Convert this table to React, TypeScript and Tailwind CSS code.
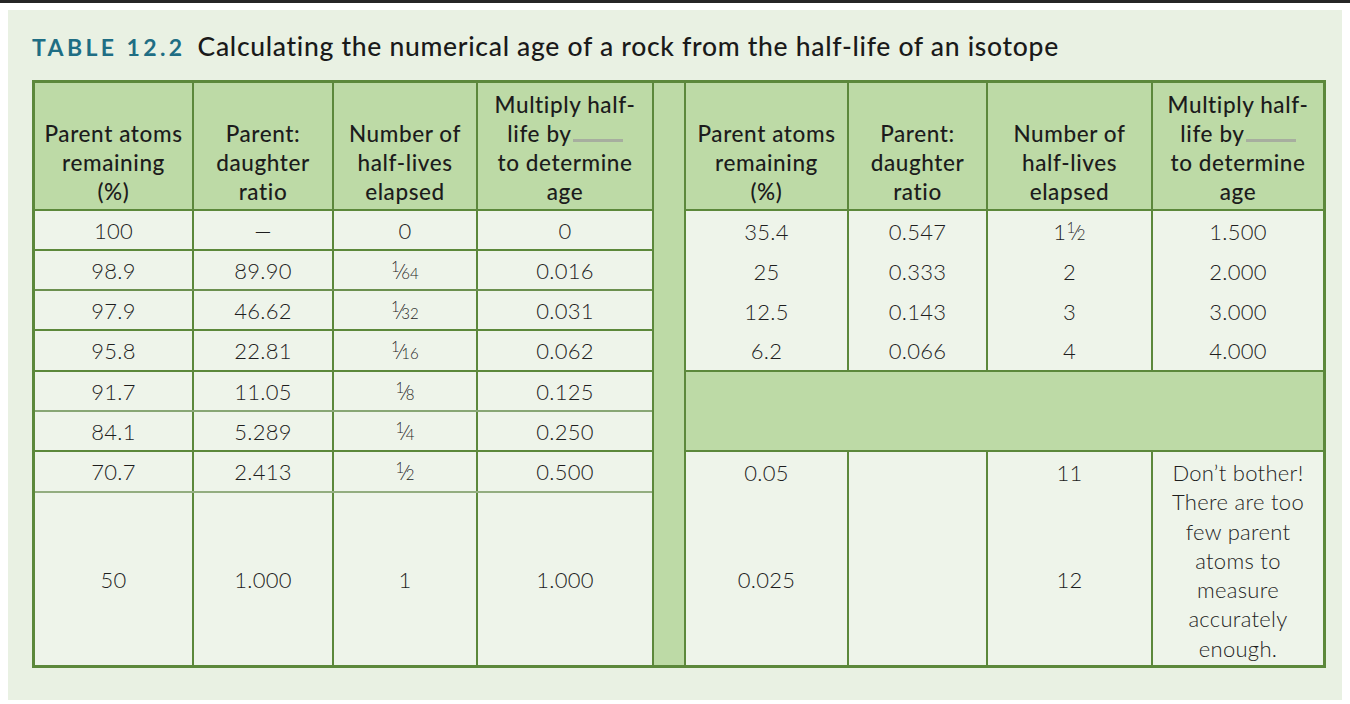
import React from "react";

const FONT = { fontFamily: "Lato, 'Open Sans', 'Liberation Sans', sans-serif" };

function Frac({ n, d }: { n: string; d: string }) {
  return (
    <span className="whitespace-nowrap">
      <span className="text-[15px] align-[7px]">{n}</span>
      <span className="text-[21px] mx-[-1px]">⁄</span>
      <span className="text-[15px]">{d}</span>
    </span>
  );
}

const HEADERS: React.ReactNode[] = [
  <>Parent atoms<br />remaining<br />(%)</>,
  <>Parent:<br />daughter<br />ratio</>,
  <>Number of<br />half-lives<br />elapsed</>,
  <>
    Multiply half-<br />
    life by
    <span className="inline-block w-[50px] h-[3px] bg-[#a7ae9f] align-baseline ml-[1px]" />
    <br />to determine<br />age
  </>,
];

function HeaderRow({ widths }: { widths: string[] }) {
  return (
    <div className="flex h-[128px] bg-[#bddaa6] border-b-2 border-[#5c883b]">
      {HEADERS.map((h, i) => (
        <div
          key={i}
          className={`${widths[i]} flex flex-col justify-end items-center text-center pb-[3px] leading-[29px] text-[22.5px] tracking-[0.6px] font-medium text-[#1c1c1c] ${
            i < 3 ? "border-r-2 border-[#5c883b]" : ""
          }`}
        >
          <div>{h}</div>
        </div>
      ))}
    </div>
  );
}

const LW = ["w-[159px]", "w-[140px]", "w-[144px]", "w-[174px]"];
const RW = ["w-[163px]", "w-[139px]", "w-[165px]", "w-[170px]"];

type Row = { cells: React.ReactNode[]; h: string; line: string };

const LEFT_ROWS: Row[] = [
  { cells: ["100", "—", "0", "0"], h: "h-[40px]", line: "border-[#5c883b]" },
  { cells: ["98.9", "89.90", <Frac n="1" d="64" />, "0.016"], h: "h-[40px]", line: "border-[#6b8f4f]" },
  { cells: ["97.9", "46.62", <Frac n="1" d="32" />, "0.031"], h: "h-[40px]", line: "border-[#5c883b]" },
  { cells: ["95.8", "22.81", <Frac n="1" d="16" />, "0.062"], h: "h-[41px]", line: "border-[#5c883b]" },
  { cells: ["91.7", "11.05", <Frac n="1" d="8" />, "0.125"], h: "h-[40px]", line: "border-[#88a675]" },
  { cells: ["84.1", "5.289", <Frac n="1" d="4" />, "0.250"], h: "h-[40px]", line: "border-[#5c883b]" },
  { cells: ["70.7", "2.413", <Frac n="1" d="2" />, "0.500"], h: "h-[41px]", line: "border-[#93ad80]" },
];

const RIGHT_ROWS: React.ReactNode[][] = [
  ["35.4", "0.547", <>1<Frac n="1" d="2" /></>, "1.500"],
  ["25", "0.333", "2", "2.000"],
  ["12.5", "0.143", "3", "3.000"],
  ["6.2", "0.066", "4", "4.000"],
];

const RH = ["h-[40px]", "h-[40px]", "h-[40px]", "h-[39px]"];

export default function App() {
  return (
    <div className="w-[1350px] h-[704px] bg-white overflow-hidden" style={FONT}>
      <div className="h-[3px] bg-[#262626]" />
      <div className="ml-[8px] mt-[7px] w-[1334px] h-[690px] bg-[#e9f1e3] pl-[24px] pt-[20px]">
        <div className="flex items-baseline h-[32px] leading-[32px] mb-[18px]">
          <span className="text-[23px] font-bold tracking-[3.4px] text-[#1f6e84] mr-[12px]">TABLE 12.2</span>
          <span className="text-[26.5px] font-medium text-[#1a1a1a] tracking-[0.7px]">
            Calculating the numerical age of a rock from the half-life of an isotope
          </span>
        </div>

        <div className="w-[1294px] h-[588px] border-[3px] border-[#5c883b] flex text-[#1e1e1e] text-[22px] tracking-[0.3px] font-light">
          {/* Left table */}
          <div className="w-[617px] flex flex-col">
            <HeaderRow widths={LW} />
            {LEFT_ROWS.map((r, ri) => (
              <div key={ri} className={`flex ${r.h} border-b-2 ${r.line} bg-[#eef4ea]`}>
                {r.cells.map((c, ci) => (
                  <div
                    key={ci}
                    className={`${LW[ci]} flex items-center justify-center ${
                      ci < 3 ? "border-r-2 border-[#5c883b]" : ""
                    }`}
                  >
                    {c}
                  </div>
                ))}
              </div>
            ))}
            <div className="flex flex-1 bg-[#eef4ea]">
              {["50", "1.000", "1", "1.000"].map((c, ci) => (
                <div
                  key={ci}
                  className={`${LW[ci]} flex items-center justify-center ${
                    ci < 3 ? "border-r-2 border-[#5c883b]" : ""
                  }`}
                >
                  {c}
                </div>
              ))}
            </div>
          </div>

          {/* Middle band */}
          <div className="w-[34px] bg-[#bddaa6] border-x-2 border-[#5c883b]" />

          {/* Right table */}
          <div className="w-[637px] flex flex-col">
            <HeaderRow widths={RW} />
            <div className="bg-[#eef4ea] border-b-2 border-[#5c883b]">
              {RIGHT_ROWS.map((r, ri) => (
                <div key={ri} className={`flex ${RH[ri]}`}>
                  {r.map((c, ci) => (
                    <div
                      key={ci}
                      className={`${RW[ci]} flex items-center justify-center ${
                        ci < 3 ? "border-r-2 border-[#5c883b]" : ""
                      }`}
                    >
                      {c}
                    </div>
                  ))}
                </div>
              ))}
            </div>
            <div className="h-[80px] bg-[#bddaa6] border-b-2 border-[#5c883b]" />
            <div className="flex flex-1 bg-[#eef4ea]">
              <div className={`${RW[0]} flex flex-col border-r-2 border-[#5c883b]`}>
                <div className="h-[41px] flex items-center justify-center">0.05</div>
                <div className="flex-1 flex items-center justify-center">0.025</div>
              </div>
              <div className={`${RW[1]} border-r-2 border-[#5c883b]`} />
              <div className={`${RW[2]} flex flex-col border-r-2 border-[#5c883b]`}>
                <div className="h-[41px] flex items-center justify-center">11</div>
                <div className="flex-1 flex items-center justify-center">12</div>
              </div>
              <div className={`${RW[3]} text-center pt-[6px] leading-[29.3px]`}>
                Don’t bother!
                <br />
                There are too
                <br />
                few parent
                <br />
                atoms to
                <br />
                measure
                <br />
                accurately
                <br />
                enough.
              </div>
            </div>
          </div>
        </div>
      </div>
    </div>
  );
}
